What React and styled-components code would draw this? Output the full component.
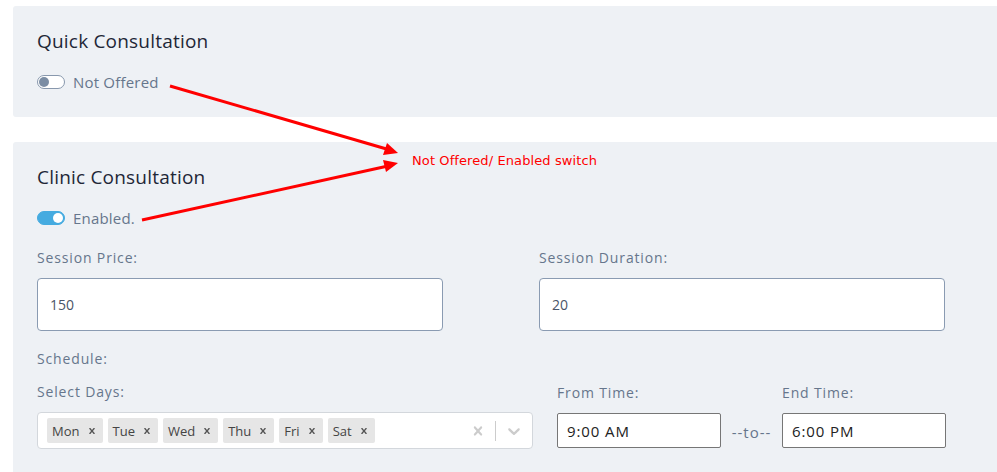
import React from "react";
import styled, { createGlobalStyle } from "styled-components";

const GlobalStyle = createGlobalStyle`
  html, body {
    margin: 0;
    padding: 0;
    background: #ffffff;
    overflow: hidden;
  }
  body {
    font-family: "Open Sans", "Noto Sans", sans-serif;
  }
`;

const Page = styled.div`
  position: relative;
  width: 997px;
  height: 472px;
  padding: 6px 0 0 13px;
  box-sizing: border-box;
  display: flex;
  flex-direction: column;
  gap: 25px;
`;

const Card = styled.section`
  width: 1000px;
  box-sizing: border-box;
  background: #eef1f5;
  border-radius: 3px;
  padding: 23px 24px ${(p) => (p.$last ? "30px" : "27px")};
  display: flex;
  flex-direction: column;
`;

const Title = styled.h2`
  margin: 0;
  font-size: 19px;
  line-height: 25px;
  font-weight: 400;
  color: #1e2737;
  letter-spacing: 0.2px;
`;

const ToggleRow = styled.label`
  display: flex;
  align-items: center;
  gap: 8px;
  margin-top: 20px;
  height: 16px;
  font-size: 15px;
  color: #66768c;
  letter-spacing: 0.2px;
`;

const Track = styled.span`
  position: relative;
  width: 28px;
  height: 14px;
  border-radius: 8px;
  box-sizing: border-box;
  background: ${(p) => (p.$on ? "#45abe0" : "#ffffff")};
  border: 1px solid ${(p) => (p.$on ? "#45abe0" : "#8898ad")};
`;

const Knob = styled.span`
  position: absolute;
  top: 1px;
  left: ${(p) => (p.$on ? "15px" : "1px")};
  width: 10px;
  height: 10px;
  border-radius: 50%;
  background: ${(p) => (p.$on ? "#ffffff" : "#7b8da4")};
`;

const Grid = styled.div`
  display: grid;
  grid-template-columns: 406px 406px;
  column-gap: 96px;
  margin-top: 22px;
`;

const Field = styled.div`
  display: flex;
  flex-direction: column;
  gap: 10px;
`;

const Label = styled.div`
  font-size: 14px;
  line-height: 20px;
  color: #66768c;
  letter-spacing: 0.85px;
`;

const BigInput = styled.div`
  height: 53px;
  box-sizing: border-box;
  background: #fff;
  border: 1px solid #8a9bb2;
  border-radius: 4px;
  padding: 0 12px;
  display: flex;
  align-items: center;
  font-size: 14px;
  color: #4a5568;
`;

const ScheduleLabel = styled(Label)`
  margin-top: 18px;
`;

const ScheduleRow = styled.div`
  display: flex;
  align-items: flex-end;
  margin-top: 13px;
`;

const DaysField = styled(Field)`
  width: 496px;
`;

const Select = styled.div`
  height: 37px;
  box-sizing: border-box;
  background: #fff;
  border: 1px solid #d3d7dc;
  border-radius: 4px;
  display: flex;
  align-items: center;
  padding-left: 9px;
`;

const Tags = styled.div`
  flex: 1;
  display: flex;
  gap: 5px;
`;

const Tag = styled.span`
  display: flex;
  align-items: center;
  height: 25px;
  background: #e6e6e6;
  border-radius: 2px;
  padding: 0 5px 0 5px;
  font-size: 13px;
  color: #444;
  gap: 6px;
`;

const Indicators = styled.div`
  display: flex;
  align-items: center;
  height: 100%;
  color: #cccccc;
`;

const IconBox = styled.span`
  display: flex;
  align-items: center;
  justify-content: center;
  padding: 0 8px;
`;

const Sep = styled.span`
  width: 1px;
  height: 20px;
  background: #cccccc;
`;

const TimeField = styled(Field)`
  width: 164px;
  margin-bottom: 1px;
  margin-left: ${(p) => p.$ml || "0"};
`;

const TimeInput = styled.div`
  height: 35px;
  box-sizing: border-box;
  background: #fff;
  border: 1px solid #767676;
  border-radius: 2px;
  padding: 0 9px;
  display: flex;
  align-items: center;
  font-size: 15px;
  color: #222;
  letter-spacing: 0.9px;
`;

const To = styled.span`
  width: 61px;
  height: 35px;
  display: flex;
  align-items: center;
  justify-content: center;
  font-size: 15px;
  color: #66768c;
  letter-spacing: 1px;
`;

const Overlay = styled.svg`
  position: absolute;
  left: 0;
  top: 0;
  pointer-events: none;
`;

const Note = styled.span`
  position: absolute;
  left: 412px;
  top: 153px;
  font-family: "DejaVu Sans", sans-serif;
  font-size: 13px;
  color: #ff0000;
  letter-spacing: 0.1px;
`;

const Cross = ({ size = 14, color = "currentColor" }) => (
  <svg width={size} height={size} viewBox="0 0 20 20" fill={color}>
    <path d="M14.348 14.849c-0.469 0.469-1.229 0.469-1.697 0l-2.651-3.030-2.651 3.029c-0.469 0.469-1.229 0.469-1.697 0-0.469-0.469-0.469-1.229 0-1.697l2.758-3.15-2.759-3.152c-0.469-0.469-0.469-1.228 0-1.697s1.228-0.469 1.697 0l2.652 3.031 2.651-3.031c0.469-0.469 1.228-0.469 1.697 0s0.469 1.229 0 1.697l-2.758 3.152 2.758 3.15c0.469 0.469 0.469 1.229 0 1.698z" />
  </svg>
);

const Chevron = () => (
  <svg width="20" height="20" viewBox="0 0 20 20" fill="#cccccc">
    <path d="M4.516 7.548c0.436-0.446 1.043-0.481 1.576 0l3.908 3.747 3.908-3.747c0.533-0.481 1.141-0.446 1.574 0 0.436 0.445 0.408 1.197 0 1.615-0.406 0.418-4.695 4.502-4.695 4.502-0.217 0.223-0.502 0.335-0.787 0.335s-0.57-0.112-0.789-0.335c0 0-4.287-4.084-4.695-4.502s-0.436-1.17 0-1.615z" />
  </svg>
);

const Toggle = ({ on, text }) => (
  <ToggleRow>
    <Track $on={on}>
      <Knob $on={on} />
    </Track>
    {text}
  </ToggleRow>
);

const days = ["Mon", "Tue", "Wed", "Thu", "Fri", "Sat"];

export default function App() {
  return (
    <>
      <GlobalStyle />
      <Page>
        <Card>
          <Title>Quick Consultation</Title>
          <Toggle on={false} text="Not Offered" />
        </Card>
        <Card $last>
          <Title>Clinic Consultation</Title>
          <Toggle on text="Enabled." />
          <Grid>
            <Field>
              <Label>Session Price:</Label>
              <BigInput>150</BigInput>
            </Field>
            <Field>
              <Label>Session Duration:</Label>
              <BigInput>20</BigInput>
            </Field>
          </Grid>
          <ScheduleLabel>Schedule:</ScheduleLabel>
          <ScheduleRow>
            <DaysField>
              <Label>Select Days:</Label>
              <Select>
                <Tags>
                  {days.map((d) => (
                    <Tag key={d}>
                      {d}
                      <Cross size={12} color="#555" />
                    </Tag>
                  ))}
                </Tags>
                <Indicators>
                  <IconBox>
                    <Cross size={18} color="#cccccc" />
                  </IconBox>
                  <Sep />
                  <IconBox>
                    <Chevron />
                  </IconBox>
                </Indicators>
              </Select>
            </DaysField>
            <TimeField $ml="24px">
              <Label>From Time:</Label>
              <TimeInput>9:00 AM</TimeInput>
            </TimeField>
            <To>--to--</To>
            <TimeField>
              <Label>End Time:</Label>
              <TimeInput>6:00 PM</TimeInput>
            </TimeField>
          </ScheduleRow>
        </Card>
        <Overlay width="997" height="472">
          <line x1="170" y1="86" x2="390" y2="150" stroke="#ff0000" strokeWidth="3" />
          <polygon points="398,153 383,155 387,143" fill="#ff0000" />
          <line x1="142" y1="220" x2="388" y2="166" stroke="#ff0000" strokeWidth="3" />
          <polygon points="398,163 386,172 383,160" fill="#ff0000" />
        </Overlay>
        <Note>Not Offered/ Enabled switch</Note>
      </Page>
    </>
  );
}
